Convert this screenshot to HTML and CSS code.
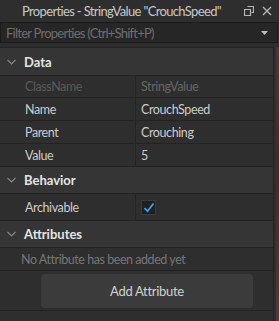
FILE: index.html
```html
<!DOCTYPE html>
<html lang="en">
  <head>
    <meta charset="UTF-8" />
    <title>Properties</title>
    <link rel="stylesheet" href="styles.css">
  </head>
  <body>
    <div class="window">
      <div class="titlebar">
        <span class="title">Properties - StringValue "CrouchSpeed"</span>
        <div class="title-icons">
          <svg width="10" height="10" viewBox="0 0 10 10">
            <path d="M3.5 0.5h6v6h-2M0.5 3.5h6v6h-6z" fill="none" stroke="#b5b5b5" stroke-width="1.2" />
          </svg>
          <svg width="10" height="10" viewBox="0 0 10 10">
            <path d="M1 1l8 8M9 1l-8 8" stroke="#b5b5b5" stroke-width="1.4" />
          </svg>
        </div>
      </div>

      <div class="filter">
        <span>Filter Properties (Ctrl+Shift+P)</span>
        <svg width="7" height="4" viewBox="0 0 7 4"><path d="M0 0h7L3.5 4z" fill="#bdbdbd" /></svg>
      </div>

      <div class="body">
        <div class="list">
          <div class="section section-first">
            <svg class="chevron" width="9" height="6" viewBox="0 0 9 6">
              <path d="M0.5 0.8l4 4 4-4" fill="none" stroke="#8a8a8a" stroke-width="1.2" />
            </svg>
            <span>Data</span>
          </div>
          <div class="row row-short disabled">
            <div class="label">ClassName</div>
            <div class="value">StringValue</div>
          </div>
          <div class="row">
            <div class="label">Name</div>
            <div class="value">CrouchSpeed</div>
          </div>
          <div class="row">
            <div class="label">Parent</div>
            <div class="value">Crouching</div>
          </div>
          <div class="row">
            <div class="label">Value</div>
            <div class="value">5</div>
          </div>

          <div class="section">
            <svg class="chevron" width="9" height="6" viewBox="0 0 9 6">
              <path d="M0.5 0.8l4 4 4-4" fill="none" stroke="#8a8a8a" stroke-width="1.2" />
            </svg>
            <span>Behavior</span>
          </div>
          <div class="row row-tall">
            <div class="label">Archivable</div>
            <div class="value">
              <span class="checkbox">
                <svg width="12" height="11" viewBox="0 0 12 11">
                  <path d="M1.5 6l3 3.2L10.5 1.5" fill="none" stroke="#3aa3f5" stroke-width="1.8" />
                </svg>
              </span>
            </div>
          </div>

          <div class="section">
            <svg class="chevron" width="9" height="6" viewBox="0 0 9 6">
              <path d="M0.5 0.8l4 4 4-4" fill="none" stroke="#8a8a8a" stroke-width="1.2" />
            </svg>
            <span>Attributes</span>
          </div>
          <div class="empty">No Attribute has been added yet</div>
          <div class="add-wrap">
            <button class="add-btn">Add Attribute</button>
          </div>
        </div>
        <div class="edge"></div>
      </div>
    </div>
  </body>
</html>
```

FILE: styles.css
```css
* {
  padding: 0px;
  margin: 0px;
  box-sizing: border-box;
  font-family: "Lato", "Liberation Sans", sans-serif;
}

body {
  width: 279px;
  height: 321px;
  overflow: hidden;
  background-color: #2e2e2e;
}

.window {
  display: flex;
  flex-direction: column;
  height: 321px;
}

.titlebar {
  height: 21px;
  display: flex;
  align-items: center;
  padding-left: 22px;
  padding-right: 7px;
  color: #c8c8c8;
  font-size: 13px;
  letter-spacing: -0.65px;
  white-space: nowrap;
}

.title {
  flex: 1;
}

.title-icons {
  display: flex;
  gap: 8px;
  align-items: center;
}

.filter {
  height: 21px;
  margin-top: 1px;
  margin-right: 1px;
  border: 1px solid #1b1b1b;
  background-color: #262626;
  display: flex;
  align-items: center;
  justify-content: space-between;
  padding: 0 9px 0 5px;
  color: #6e6e6e;
  font-size: 13px;
  letter-spacing: -0.75px;
}

.body {
  flex: 1;
  display: flex;
  margin-top: 4px;
}

.list {
  flex: 1;
  margin-right: 2px;
  border-top: 1px solid #232323;
  border-right: 1px solid #232323;
}

.edge {
  width: 3px;
  background: linear-gradient(#4a3a2c, #3a2f26 40%, #4b3c2e);
}

.section {
  height: 27px;
  display: flex;
  align-items: center;
  gap: 8px;
  padding-left: 7px;
  background-color: #353535;
  border-bottom: 1px solid #232323;
  color: #e4e4e4;
  font-weight: 700;
  font-size: 13px;
}

.section-first {
  height: 28px;
}

.row {
  height: 23px;
  display: flex;
  border-bottom: 1px solid #232323;
  color: #cccccc;
  font-size: 12.5px;
  letter-spacing: -0.4px;
}

.row-short {
  height: 22px;
}

.row-tall {
  height: 27px;
}

.label {
  width: 136px;
  padding-left: 25px;
  display: flex;
  align-items: center;
  border-right: 1px solid #232323;
}

.value {
  flex: 1;
  padding-left: 5px;
  display: flex;
  align-items: center;
}

.disabled .label {
  color: #5a5a5a;
}

.disabled .value {
  color: #666666;
}

.checkbox {
  width: 15px;
  height: 15px;
  background-color: #1f1f1f;
  border: 1px solid #3c3c3c;
  display: flex;
  align-items: center;
  justify-content: center;
}

.empty {
  height: 23px;
  display: flex;
  align-items: center;
  padding-left: 21px;
  border-bottom: 1px solid #232323;
  color: #777777;
  font-size: 12.5px;
  letter-spacing: -0.45px;
}

.add-wrap {
  height: 40px;
  padding: 3px 0 0 41px;
  border-bottom: 1px solid #232323;
}

.add-btn {
  width: 212px;
  height: 34px;
  background-color: #3b3b3b;
  border: none;
  border-radius: 4px;
  color: #d2d2d2;
  font-size: 13px;
  letter-spacing: -0.3px;
  cursor: pointer;
}
```
